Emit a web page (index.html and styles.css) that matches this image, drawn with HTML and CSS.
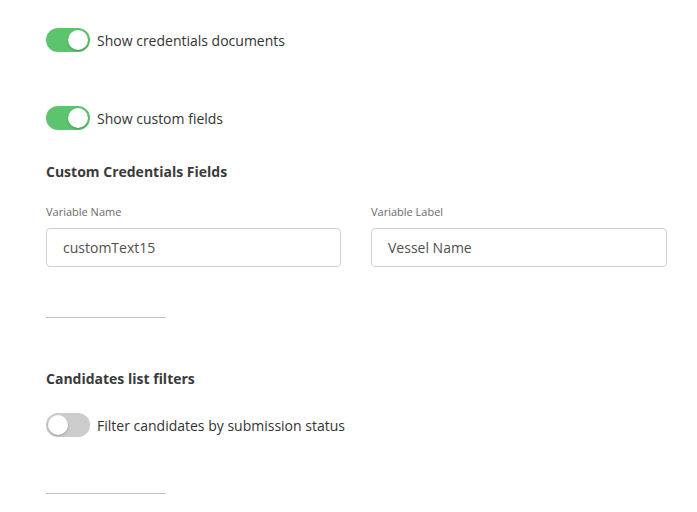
FILE: index.html
```html
<!DOCTYPE html>
<html lang="en">
<head>
  <meta charset="UTF-8" />
  <meta name="viewport" content="width=device-width, initial-scale=1.0"/>
  <title>Credentials Settings</title>
  <link rel="stylesheet" href="styles.css">
</head>
<body>
  <div class="settings">
    <label class="switch-row">
      <span class="switch on"><span class="knob"></span></span>
      <span class="switch-text">Show credentials documents</span>
    </label>

    <label class="switch-row second">
      <span class="switch on"><span class="knob"></span></span>
      <span class="switch-text">Show custom fields</span>
    </label>

    <h3 class="section-title">Custom Credentials Fields</h3>

    <div class="fields">
      <div class="field">
        <div class="field-label">Variable Name</div>
        <div class="field-input">customText15</div>
      </div>
      <div class="field">
        <div class="field-label">Variable Label</div>
        <div class="field-input">Vessel Name</div>
      </div>
    </div>

    <div class="divider"></div>

    <h3 class="section-title second">Candidates list filters</h3>

    <label class="switch-row filter">
      <span class="switch"><span class="knob"></span></span>
      <span class="switch-text">Filter candidates by submission status</span>
    </label>

    <div class="divider last"></div>
  </div>
</body>
</html>
```

FILE: styles.css
```css
body {
  font-family: 'Open Sans', 'Noto Sans', sans-serif;
  background-color: #ffffff;
  color: #333333;
  margin: 0;
  padding: 0;
}

.settings {
  padding: 28px 30px 0 46px;
}

.switch-row {
  display: flex;
  align-items: center;
  gap: 7px;
  height: 24px;
  cursor: pointer;
}

.switch-row.second {
  margin-top: 54px;
}

.switch-row.filter {
  margin-top: 24px;
}

.switch {
  position: relative;
  width: 44px;
  height: 24px;
  border-radius: 12px;
  background-color: #cccccc;
  flex-shrink: 0;
}

.switch.on {
  background-color: #5bc46c;
}

.knob {
  position: absolute;
  top: 2px;
  left: 2px;
  width: 20px;
  height: 20px;
  border-radius: 50%;
  background-color: #ffffff;
  box-shadow: 0 1px 2px rgba(0, 0, 0, 0.25);
}

.switch.on .knob {
  left: 22px;
}

.switch-text {
  font-size: 14px;
  color: #333333;
}

.section-title {
  margin: 32px 0 0;
  font-size: 14px;
  line-height: 20px;
  font-weight: 700;
  color: #3a3a3a;
}

.section-title.second {
  margin-top: 51px;
}

.fields {
  display: grid;
  grid-template-columns: 295px 1fr;
  gap: 30px;
  margin-top: 22px;
}

.field-label {
  font-size: 11px;
  line-height: 16px;
  color: #6b6b6b;
}

.field-input {
  margin-top: 8px;
  height: 39px;
  box-sizing: border-box;
  border: 1px solid #cfcfcf;
  border-radius: 4px;
  padding: 0 16px;
  display: flex;
  align-items: center;
  font-size: 14px;
  color: #505050;
}

.divider {
  width: 120px;
  height: 1px;
  background-color: #c4c4c4;
  margin-top: 50px;
}

.divider.last {
  margin-top: 56px;
}
```
